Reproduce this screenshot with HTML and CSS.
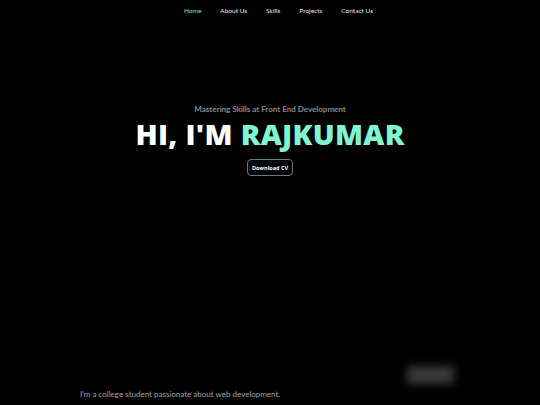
FILE: index.html
```html
<!DOCTYPE html>
<html>
<head>
<meta charset="utf-8">
<link rel="stylesheet" href="styles.css">
</head>
<body>
<nav class="nav">
  <a class="nav-link active">Home</a>
  <a class="nav-link">About Us</a>
  <a class="nav-link">Skills</a>
  <a class="nav-link">Projects</a>
  <a class="nav-link">Contact Us</a>
</nav>
<section class="hero">
  <p class="subtitle">Mastering Skills at Front End Development</p>
  <h1 class="title">HI, I'M <span class="accent">RAJKUMAR</span></h1>
  <button class="cv-btn">Download CV</button>
</section>
<section class="bottom">
  <div class="blur-box"></div>
  <p class="about">I'm a college student passionate about web development.</p>
</section>
</body>
</html>
```
FILE: styles.css
```css
html, body {
  margin: 0;
  padding: 0;
  background: #000;
  width: 540px;
  height: 405px;
  overflow: hidden;
  font-family: "Lato", "Open Sans", sans-serif;
}
.nav {
  display: flex;
  justify-content: center;
  gap: 19px;
  padding-top: 6px;
  height: 17px;
  margin-left: 17px;
}
.nav-link {
  color: #e6e6e6;
  font-size: 6.5px;
  line-height: 9px;
}
.nav-link.active {
  color: #7fe0c0;
}
.hero {
  display: flex;
  flex-direction: column;
  align-items: center;
  padding-top: 81px;
}
.subtitle {
  margin: 0;
  color: #8a8a8a;
  font-size: 8px;
  font-weight: 700;
  line-height: 10px;
}
.title {
  margin: 1px 0 0 0;
  color: #fff;
  font-family: "Open Sans", sans-serif;
  font-weight: 800;
  font-size: 29px;
  line-height: 38px;
  letter-spacing: 0.3px;
}
.accent {
  color: #80f5d2;
}
.cv-btn {
  margin-top: 6px;
  background: #000;
  color: #fff;
  border: 1px solid #6a7a74;
  border-radius: 4px;
  font-family: "Open Sans", sans-serif;
  font-weight: 700;
  font-size: 5.5px;
  padding: 0;
  width: 46px;
  height: 17px;
  white-space: nowrap;
}
.bottom {
  position: relative;
  margin-top: 213px;
  padding-left: 80px;
}
.about {
  margin: 0;
  color: #a0a0a0;
  font-size: 8px;
  line-height: 10px;
}
.blur-box {
  position: absolute;
  left: 407px;
  top: -23px;
  width: 47px;
  height: 18px;
  background: #383838;
  filter: blur(4px);
}
```
